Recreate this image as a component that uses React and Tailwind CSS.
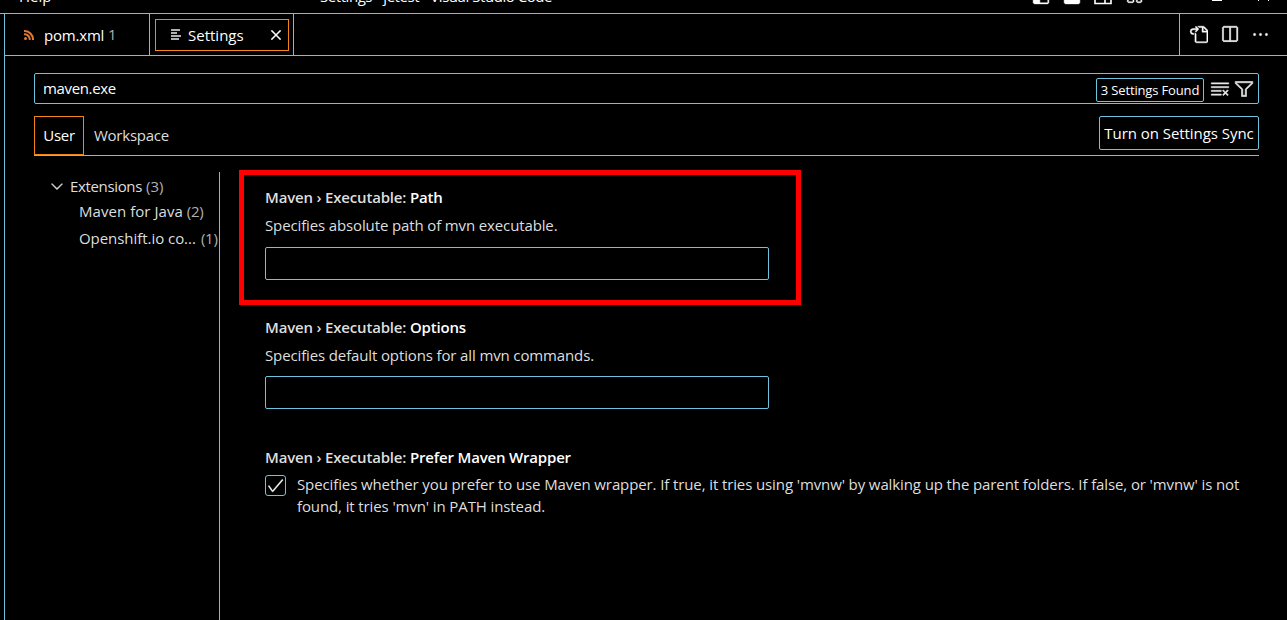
import React from 'react';
import {
    VscCheck,
    VscChevronDown,
    VscClearAll,
    VscClose,
    VscEllipsis,
    VscFilter,
    VscGoToFile,
    VscLayout,
    VscLayoutPanel,
    VscLayoutSidebarLeft,
    VscSplitHorizontal,
} from 'react-icons/vsc';

const TitleBar = () => (
    <header className="flex h-[13px] shrink-0 items-end overflow-hidden whitespace-nowrap">
        <span className="ml-[19px] h-7 w-[301px] text-[15px] leading-[22px]">Help</span>
        <span className="h-7 w-[712px] text-[15px] leading-[22px] tracking-[-0.45px]">Settings - jetest - Visual Studio Code</span>
        <div className="flex h-[26px] gap-[13px]">
            <VscLayoutSidebarLeft size={18} strokeWidth={0.4} />
            <VscLayoutPanel size={18} strokeWidth={0.4} />
            <svg width="18" height="18" viewBox="0 0 18 18" fill="none" stroke="currentColor" strokeWidth="1.6">
                <path d="M1 1.5h16v15H1zM11 1.5v15M1 11.5h16" />
            </svg>
            <VscLayout size={18} strokeWidth={0.4} />
        </div>
        <div className="ml-[69px] flex h-[13px] gap-9">
            <span className="h-px w-2.5 bg-white" />
            <span className="flex w-[11px] justify-between">
                <span className="size-px bg-white" />
                <span className="size-px bg-white" />
            </span>
        </div>
    </header>
);

const TabBar = () => (
    <div className="flex h-[42px] shrink-0 border-b border-[#6fc3df]">
        <div className="flex w-[145px] items-center border-r border-[#6fc3df] pl-[19px]">
            <svg width="10" height="10" viewBox="0 0 10 10" fill="none" stroke="#e37933" strokeWidth="2">
                <circle cx="1.5" cy="8.5" r="1.5" fill="#e37933" stroke="none" />
                <path d="M0 4.2A5 5 0 0 1 5.6 10M0 1A8.6 8.6 0 0 1 9 10" />
            </svg>
            <span className="ml-2.5 w-[65px] pt-px text-[15px] tracking-[-0.2px]">pom.xml</span>
            <span className="-ml-px text-[15px] text-[#b0b0b0]">1</span>
        </div>
        <div className="w-36 border-r border-[#6fc3df] p-[5px]">
            <div className="flex h-8 w-[134px] items-center border border-[#f38518] pl-3.5">
                <svg width="12" height="12" viewBox="0 0 12 12" fill="#b0b0b0" shapeRendering="crispEdges">
                    <path d="M1 0h9v2H1zM1 3h6v2H1zM1 6h10v2H1zM1 9h8v2H1z" />
                </svg>
                <span className="ml-[6px] w-[79px] text-[15px]">Settings</span>
                <VscClose size={18} strokeWidth={0.4} />
            </div>
        </div>
        <div className="ml-auto flex w-[108px] items-center gap-3 border-l border-[#6fc3df] pl-[9px]">
            <VscGoToFile size={19} strokeWidth={0.4} />
            <VscSplitHorizontal size={19} strokeWidth={0.4} />
            <VscEllipsis size={19} strokeWidth={0.3} />
        </div>
    </div>
);

const SearchBox = () => (
    <div className="flex h-[31px] items-center rounded-[2px] border border-[#6fc3df] pl-2 pr-1">
        <span className="flex-1 text-[15px] tracking-[-0.35px]">maven.exe</span>
        <span className="mt-[3px] flex h-6 w-[108px] items-center justify-center rounded-[2px] border border-[#6fc3df] pt-px text-[13px] tracking-[-0.15px]">
            3 Settings Found
        </span>
        <VscClearAll size={20} strokeWidth={0.4} className="ml-1.5 text-[#e8e8e8]" />
        <VscFilter size={20} strokeWidth={0.5} className="ml-1 text-[#e8e8e8]" />
    </div>
);

const ScopeBar = () => (
    <div className="mt-3 flex h-10 border-b border-[#6fc3df]">
        <div className="flex h-[39px] w-[50px] items-center justify-center border border-[#f38518] text-[15px] tracking-[-0.3px]">User</div>
        <div className="flex h-[39px] items-center pl-2.5 text-[15px] tracking-[-0.25px] text-[#dedede]">Workspace</div>
        <button className="ml-auto h-[34px] w-40 rounded-[2px] border border-[#6fc3df] text-[15px] tracking-[-0.05px]">
            Turn on Settings Sync
        </button>
    </div>
);

const Tree = () => (
    <nav className="mt-4 w-[186px] shrink-0 border-r border-[#6fc3df] text-[15px] whitespace-nowrap text-[#dedede]">
        <div className="flex h-[26px] items-center pl-3.5 pt-0.5">
            <VscChevronDown size={18} strokeWidth={0.4} />
            <span className="ml-1 tracking-[-0.35px]">Extensions</span>
            <span className="ml-1 text-[#b0b0b0]">(3)</span>
        </div>
        <div className="flex h-[27px] items-center pl-[45px]">
            <span className="tracking-[0.05px]">Maven for Java</span>
            <span className="ml-1 tracking-[-0.3px] text-[#b0b0b0]">(2)</span>
        </div>
        <div className="flex h-[27px] items-center pl-[45px]">
            <span className="w-[122px] tracking-[-0.05px]">Openshift.io co...</span>
            <span className="tracking-[-0.3px] text-[#b0b0b0]">(1)</span>
        </div>
    </nav>
);

const SettingTitle = ({ name }) => (
    <h3 className="text-[15px] leading-[22px] font-semibold tracking-[-0.18px] whitespace-pre text-[#dedede]">
        Maven › Executable: <span className="text-white">{name}</span>
    </h3>
);

const TextSetting = ({ name, description }) => (
    <>
        <SettingTitle name={name} />
        <p className="mt-1.5 text-[15px] leading-[22px] tracking-[-0.13px] text-[#dedede]">{description}</p>
        <input className="mt-[11px] block h-[33px] w-[504px] rounded-[2px] border border-[#6fc3df] bg-transparent px-2" />
    </>
);

const SettingsList = () => (
    <main className="flex-1 pt-3.5 pl-[19px]">
        <section className="h-[135px] w-[562px] border-5 border-[#ff0000] pt-[11px] pl-[21px]">
            <TextSetting name="Path" description="Specifies absolute path of mvn executable." />
        </section>
        <section className="h-[130px] pt-[11px] pl-[26px] [&>input]:mt-2.5">
            <TextSetting name="Options" description="Specifies default options for all mvn commands." />
        </section>
        <section className="pt-[11px] pl-[26px]">
            <SettingTitle name="Prefer Maven Wrapper" />
            <div className="mt-[5px] flex">
                <span className="mt-[2px] flex size-[21px] shrink-0 items-center justify-center rounded-[3px] border border-[#6fc3df]">
                    <VscCheck size={19} strokeWidth={0.3} />
                </span>
                <p className="ml-[11px] text-[15px] leading-[22px] tracking-[-0.11px] whitespace-nowrap text-[#dedede]">
                    Specifies whether you prefer to use Maven wrapper. If true, it tries using 'mvnw' by walking up the parent folders. If false, or 'mvnw' is not
                    <br />
                    found, it tries 'mvn' in PATH instead.
                </p>
            </div>
        </section>
    </main>
);

const App = () => (
    <div className="flex h-screen flex-col overflow-hidden bg-black font-['Open_Sans',sans-serif] text-white">
        <TitleBar />
        <div className="flex flex-1 flex-col border-t border-[#6fc3df]">
            <div className="ml-1 flex flex-1 flex-col border-l border-[#6fc3df]">
                <TabBar />
                <div className="flex flex-1 flex-col pt-[17px] pr-7 pl-[29px]">
                    <SearchBox />
                    <ScopeBar />
                    <div className="flex flex-1">
                        <Tree />
                        <SettingsList />
                    </div>
                </div>
            </div>
        </div>
    </div>
);

export default App;
